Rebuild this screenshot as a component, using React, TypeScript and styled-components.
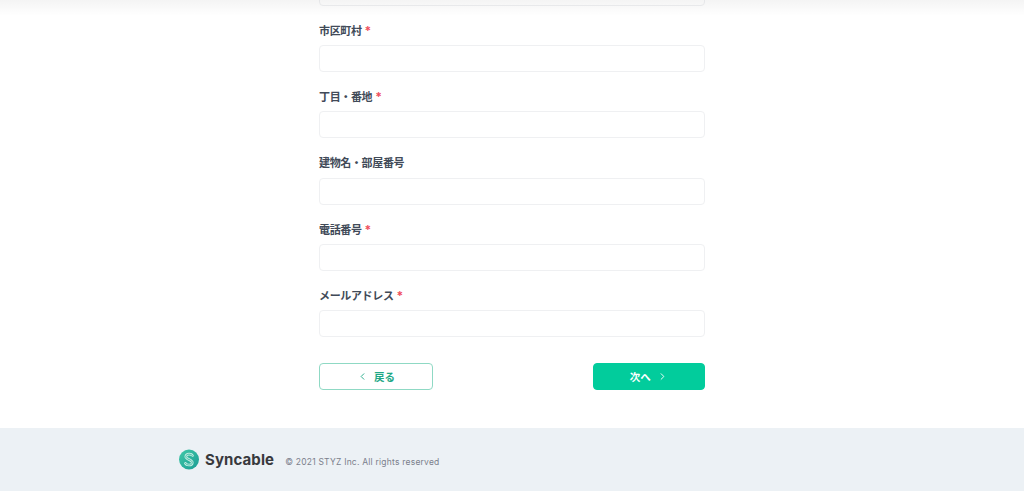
import styled, { createGlobalStyle } from 'styled-components';
import { ChevronLeft, ChevronRight } from 'lucide-react';

const GlobalStyle = createGlobalStyle`
  html, body {
    margin: 0;
    padding: 0;
    background: #fff;
    overflow: hidden;
  }
  body {
    font-family: Inter, "Noto Sans CJK JP", sans-serif;
  }
`;

const Page = styled.div`
  position: relative;
  height: 491px;
  overflow: hidden;
  display: flex;
  flex-direction: column;
`;
const TopShade = styled.div`
  position: absolute;
  top: 0;
  left: 0;
  right: 0;
  height: 16px;
  background: linear-gradient(to bottom, rgba(0, 0, 0, 0.045), rgba(0, 0, 0, 0));
`;
const Form = styled.main`
  width: 386px;
  margin: -21.25px auto 0;
  display: flex;
  flex-direction: column;
  flex: 1;
`;
const Field = styled.div`
  display: flex;
  flex-direction: column;
  margin-bottom: 13px;
`;
const Label = styled.label`
  display: block;
  height: 26px;
  margin-bottom: 0.25px;
  font-size: 11px;
  letter-spacing: -0.35px;
  line-height: 24px;
  font-weight: 700;
  color: #414a58;
`;
const Required = styled.span`
  color: #ef4f5c;
  margin-left: 3px;
  font-size: 12px;
  line-height: 1;
`;
const Input = styled.input`
  box-sizing: border-box;
  width: 100%;
  height: 27px;
  padding: 0 10px;
  background: #fff;
  border: 1px solid #eff0f2;
  border-radius: 4px;
  outline: none;
`;
const Actions = styled.div`
  display: flex;
  justify-content: space-between;
  margin-top: 13px;
`;
const Button = styled.button<{ $primary?: boolean }>`
  box-sizing: border-box;
  height: 27px;
  width: ${(p) => (p.$primary ? '112.5px' : '114px')};
  display: flex;
  align-items: center;
  justify-content: center;
  gap: 6px;
  padding: 0;
  font-family: inherit;
  font-size: 10.5px;
  font-weight: 700;
  border-radius: 4px;
  border: 1px solid ${(p) => (p.$primary ? '#02cc9c' : '#8fd9c4')};
  background: ${(p) => (p.$primary ? '#02cc9c' : '#fff')};
  color: ${(p) => (p.$primary ? '#fff' : '#1fa886')};
`;
const Footer = styled.footer`
  height: 63px;
  background: #ecf1f5;
  display: flex;
  align-items: center;
  padding-left: 179px;
`;
const Logo = styled.div`
  display: flex;
  align-items: center;
  gap: 6px;
`;
const LogoName = styled.span`
  font-size: 15px;
  font-weight: 700;
  letter-spacing: 0.1px;
  color: #38393d;
`;
const Copyright = styled.small`
  margin-left: 11px;
  margin-top: 4px;
  font-size: 8.5px;
  letter-spacing: 0.22px;
  color: #7b7f8c;
`;

const fields = [
  { label: '市区町村', required: true },
  { label: '丁目・番地', required: true },
  { label: '建物名・部屋番号', required: false },
  { label: '電話番号', required: true },
  { label: 'メールアドレス', required: true },
];

const sCurve =
  'M13.5 6.5C12.5 4.6 7.2 4.4 6.8 7.4C6.4 10.4 13.6 10.6 13.3 13.8C13 16.8 7.4 16.6 6.4 14.4';

function App(): JSX.Element {
  return (
    <Page>
      <GlobalStyle />
      <Form>
        <Field>
          <Input />
        </Field>
        {fields.map((f) => (
          <Field key={f.label}>
            <Label>
              {f.label}
              {f.required && <Required>*</Required>}
            </Label>
            <Input />
          </Field>
        ))}
        <Actions>
          <Button>
            <ChevronLeft size={11} strokeWidth={2} />
            戻る
          </Button>
          <Button $primary>
            次へ
            <ChevronRight size={11} strokeWidth={2} />
          </Button>
        </Actions>
      </Form>
      <Footer>
        <Logo>
          <svg width="20" height="21" viewBox="0 0 20 21">
            <defs>
              <linearGradient id="logoFill" x1="0" y1="0" x2="1" y2="1">
                <stop offset="0" stopColor="#41c9a8" />
                <stop offset="1" stopColor="#1b9c94" />
              </linearGradient>
            </defs>
            <circle cx="10" cy="10.5" r="10" fill="url(#logoFill)" />
            <path d={sCurve} fill="none" stroke="#c8efe4" strokeWidth="2.6" strokeLinecap="round" />
            <path d={sCurve} fill="none" stroke="#35b7a2" strokeWidth="0.9" strokeLinecap="round" />
          </svg>
          <LogoName>Syncable</LogoName>
        </Logo>
        <Copyright>© 2021 STYZ Inc. All rights reserved</Copyright>
      </Footer>
      <TopShade />
    </Page>
  );
}

export default App;
